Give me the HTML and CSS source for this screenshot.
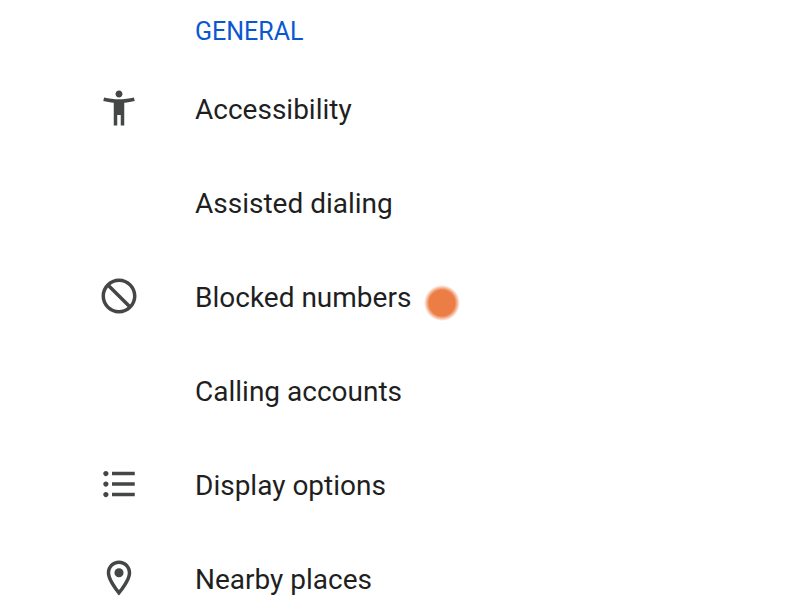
FILE: index.html
```
<!DOCTYPE html>
<html lang="en">
<head>
	<meta charset="utf-8">
	<title>Settings</title>
	<link rel="stylesheet" href="styles.css">
</head>

<body>

<main class="settings">
	<h2 class="section-title">GENERAL</h2>

	<ul class="list">
		<li><a class="item" href="#accessibility">
			<svg class="icon" viewBox="0 0 24 24" aria-hidden="true"><path d="M20.5 6c-2.61.7-5.67 1-8.5 1s-5.89-.3-8.5-1L3 8c1.86.5 4 .83 6 1v13h2v-6h2v6h2V9c2-.17 4.14-.5 6-1l-.5-2zM12 6c1.1 0 2-.9 2-2s-.9-2-2-2-2 .9-2 2 .9 2 2 2z"/></svg>
			<span class="label">Accessibility</span>
		</a></li>
		<li><a class="item" href="#assisted">
			<span class="icon"></span>
			<span class="label">Assisted dialing</span>
		</a></li>
		<li><a class="item" href="#blocked">
			<svg class="icon" viewBox="0 0 24 24" aria-hidden="true"><path d="M12 2C6.48 2 2 6.48 2 12s4.48 10 10 10 10-4.48 10-10S17.52 2 12 2zM4 12c0-4.42 3.58-8 8-8 1.85 0 3.55.63 4.9 1.69L5.69 16.9C4.63 15.55 4 13.85 4 12zm8 8c-1.85 0-3.55-.63-4.9-1.69L18.31 7.1C19.37 8.45 20 10.15 20 12c0 4.42-3.58 8-8 8z" transform="matrix(-1 0 0 1 24 0)"/></svg>
			<span class="label">Blocked numbers<span class="touch"></span></span>
		</a></li>
		<li><a class="item" href="#accounts">
			<span class="icon"></span>
			<span class="label">Calling accounts</span>
		</a></li>
		<li><a class="item" href="#display">
			<svg class="icon" viewBox="0 0 24 24" aria-hidden="true"><path d="M4.5 10.5c-.83 0-1.5.67-1.5 1.5s.67 1.5 1.5 1.5S6 12.83 6 12s-.67-1.5-1.5-1.5zm0-6C3.67 4.5 3 5.17 3 6s.67 1.5 1.5 1.5S6 6.83 6 6s-.67-1.5-1.5-1.5zm0 12c-.83 0-1.5.67-1.5 1.5s.67 1.5 1.5 1.5S6 18.83 6 18s-.67-1.5-1.5-1.5zM8 19h13v-2H8v2zm0-6h13v-2H8v2zm0-8v2h13V5H8z"/></svg>
			<span class="label">Display options</span>
		</a></li>
		<li><a class="item" href="#nearby">
			<svg class="icon" viewBox="0 0 24 24" aria-hidden="true"><path d="M12 2C8.13 2 5 5.13 5 9c0 5.25 7 13 7 13s7-7.75 7-13c0-3.87-3.13-7-7-7zM7 9c0-2.76 2.24-5 5-5s5 2.24 5 5c0 2.88-2.88 7.19-5 9.88C9.92 16.21 7 11.85 7 9z"/><circle cx="12" cy="9" r="2.6"/></svg>
			<span class="label">Nearby places</span>
		</a></li>
	</ul>
</main>

</body>
</html>
```
FILE: styles.css
```
body {margin: 0; background: #fff; font-family: Roboto, "Liberation Sans", sans-serif; color: #1f1f1f;}

.settings {padding-top: 15px;}
.section-title {margin: 0 0 14px; padding-left: 195px; font-size: 25px; line-height: 34px; font-weight: 400; color: #0b57d0;}

.list {margin: 0; padding: 0; list-style: none;}
.item {display: flex; align-items: center; gap: 55px; height: 94px; padding: 0 98px; color: inherit; text-decoration: none;}
.icon {flex: none; width: 42px; height: 42px; margin-bottom: 4px; fill: #444746;}
.label {position: relative; font-size: 28px; line-height: 40px;}

/* finger position shown over the list */
.touch {position: absolute; left: 100%; top: 7px; width: 36px; height: 36px; margin-left: 13px; border-radius: 50%; background: radial-gradient(closest-side, #ec7d45 72%, rgba(236, 125, 69, 0));}
```
